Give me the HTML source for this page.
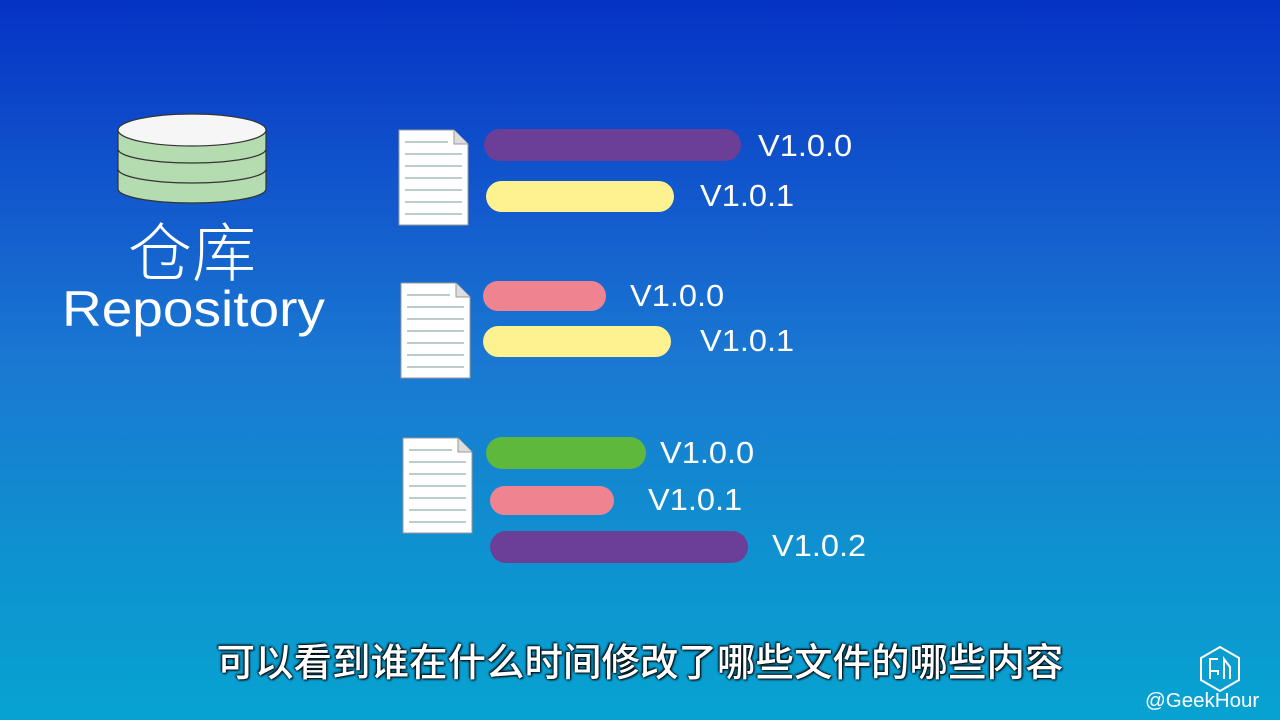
<!DOCTYPE html>
<html><head><meta charset="utf-8"><style>
body{margin:0;width:1280px;height:720px;overflow:hidden;position:relative;
background:linear-gradient(180deg,#0533c4 0%,#1155cc 25%,#1a78d2 50%,#0f90d0 75%,#07a3d0 100%);
font-family:"Liberation Sans","Noto Sans CJK SC",sans-serif;color:#fff}
.bar{position:absolute;border-radius:16px}
.v{position:absolute;font-size:31px;line-height:30px;color:#fff;transform:scaleX(1.05);transform-origin:left}
.doc{position:absolute}
</style></head><body>
<svg style="position:absolute;left:110px;top:105px" width="165" height="105">
<g fill="#b5dcb0" stroke="#333" stroke-width="1.2">
<path d="M8 64 v20 a74 14 0 0 0 148 0 v-20"/>
<path d="M8 44 v20 a74 14 0 0 0 148 0 v-20"/>
<path d="M8 24 v20 a74 14 0 0 0 148 0 v-20"/>
<ellipse cx="82" cy="25" rx="74" ry="16" fill="#f6f6f6"/>
</g></svg>
<div style="position:absolute;left:128px;top:214px;font-size:64px;line-height:70px;font-family:'Noto Sans CJK SC',sans-serif;font-weight:300">仓库</div>
<div style="position:absolute;left:62px;top:280px;font-size:50px;line-height:58px;transform:scaleX(1.1);transform-origin:left">Repository</div>

<svg class="doc" style="left:398px;top:129px" width="72" height="98"><path d="M1 1H56L70 15V96H1Z" fill="#fff" stroke="#999"/><path d="M56 1V15H70" fill="#ddd" stroke="#999"/><g stroke="#7a9a9a"><path d="M7 13H50M7 25H64M7 37H64M7 49H64M7 61H64M7 73H64M7 85H64"/></g></svg>
<svg class="doc" style="left:400px;top:282px" width="72" height="98"><path d="M1 1H56L70 15V96H1Z" fill="#fff" stroke="#999"/><path d="M56 1V15H70" fill="#ddd" stroke="#999"/><g stroke="#7a9a9a"><path d="M7 13H50M7 25H64M7 37H64M7 49H64M7 61H64M7 73H64M7 85H64"/></g></svg>
<svg class="doc" style="left:402px;top:437px" width="72" height="98"><path d="M1 1H56L70 15V96H1Z" fill="#fff" stroke="#999"/><path d="M56 1V15H70" fill="#ddd" stroke="#999"/><g stroke="#7a9a9a"><path d="M7 13H50M7 25H64M7 37H64M7 49H64M7 61H64M7 73H64M7 85H64"/></g></svg>

<div class="bar" style="left:484px;top:129px;width:257px;height:32px;background:#6b3f98"></div><div class="v" style="left:758px;top:131px">V1.0.0</div>
<div class="bar" style="left:486px;top:181px;width:188px;height:31px;background:#fdf28f"></div><div class="v" style="left:700px;top:181px">V1.0.1</div>
<div class="bar" style="left:483px;top:281px;width:123px;height:30px;background:#ef8490"></div><div class="v" style="left:630px;top:281px">V1.0.0</div>
<div class="bar" style="left:483px;top:326px;width:188px;height:31px;background:#fdf28f"></div><div class="v" style="left:700px;top:326px">V1.0.1</div>
<div class="bar" style="left:486px;top:437px;width:160px;height:32px;background:#5db83c"></div><div class="v" style="left:660px;top:438px">V1.0.0</div>
<div class="bar" style="left:490px;top:486px;width:124px;height:29px;background:#ef8490"></div><div class="v" style="left:648px;top:485px">V1.0.1</div>
<div class="bar" style="left:490px;top:531px;width:258px;height:32px;background:#6b3f98"></div><div class="v" style="left:772px;top:531px">V1.0.2</div>

<div style="position:absolute;left:0;width:1280px;top:636px;text-align:center;font-size:38.5px;line-height:48px;font-family:'Noto Sans CJK SC',sans-serif;font-weight:500;text-shadow:0 0 2px #000,1px 1px 2px #000,-1px -1px 2px #000">可以看到谁在什么时间修改了哪些文件的哪些内容</div>

<svg style="position:absolute;left:1198px;top:645px" width="44" height="48" fill="none" stroke="#fff" stroke-width="2"><path d="M22 2L41 13V35L22 46L3 35V13Z"/><path d="M20 14H12V34M12 26H20V30M26 34V14L32 22V34"/></svg>
<div style="position:absolute;left:1145px;top:689px;font-size:20.5px;line-height:24px">@GeekHour</div>
</body></html>
